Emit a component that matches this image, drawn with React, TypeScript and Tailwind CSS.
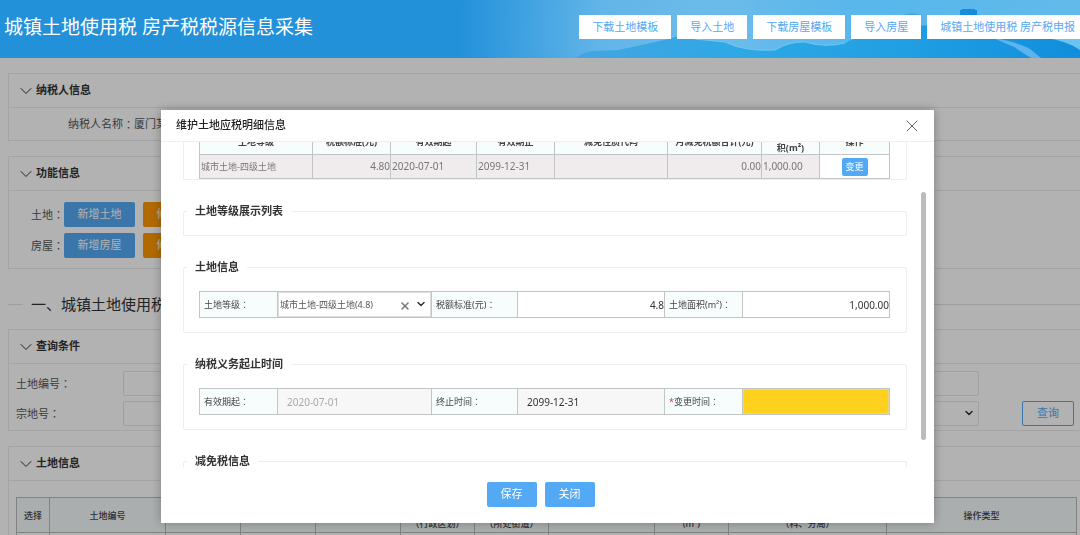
import React from 'react';
import { ChevronDown, X } from 'lucide-react';

const headerActions = ['下载土地模板', '导入土地', '下载房屋模板', '导入房屋', '城镇土地使用税 房产税申报'];

const featureRows = [
  { label: '土地', add: '新增土地', edit: '修改土地' },
  { label: '房屋', add: '新增房屋', edit: '修改房屋' }
];

const landColumns = [
  { lines: ['选择'], width: 'w-[33px]' },
  { lines: ['土地编号'], width: 'w-[116px]' },
  { lines: ['宗地号'], width: 'w-[75px]' },
  { lines: ['土地名称'], width: 'w-[75px]' },
  { lines: ['土地性质'], width: 'w-[85px]' },
  { lines: ['土地坐落', '（行政区划）'], width: 'w-[74px]' },
  { lines: ['土地坐落', '（所处街道）'], width: 'w-[74px]' },
  { lines: ['详细地址'], width: 'w-[106px]' },
  { lines: ['土地面积', '(m²)'], width: 'w-[74px]' },
  { lines: ['主管税务所', '（科、分局）'], width: 'w-[158px]' },
  { lines: ['操作类型'], width: 'w-[190px]' }
];

const detailColumns = [
  { lines: ['土地等级'], width: 'w-[113px]' },
  { lines: ['税额标准(元)'], width: 'w-[78px]' },
  { lines: ['有效期起'], width: 'w-[86px]' },
  { lines: ['有效期止'], width: 'w-[78px]' },
  { lines: ['减免性质代码'], width: 'w-[113px]' },
  { lines: ['月减免税额合计(元)'], width: 'w-[94px]' },
  { lines: ['土地面', '积(m²)'], width: 'w-[58px]' },
  { lines: ['操作'], width: 'w-[70px]' }
];

const labelCell = 'border border-[#c2c5c6] bg-[#f7fcfd] pl-1 text-left text-[9px] font-normal text-[#444]';
const fieldCell = 'h-[26px] border border-[#c2c5c6] p-0';

// The TC face centres its full-width colon
function Colon() {
  return <span className="font-['Noto_Sans_CJK_TC',sans-serif]">：</span>;
}

function HeaderArt() {
  return (
    <svg className="absolute inset-y-0 right-0 h-full w-[640px]" viewBox="-60 0 640 58" preserveAspectRatio="none" aria-hidden="true">
      <defs>
        <radialGradient id="sky" gradientUnits="userSpaceOnUse" cx="240" cy="30" r="280">
          <stop offset="0" stopColor="#70bdea" />
          <stop offset="0.5" stopColor="#62b5e8" />
          <stop offset="1" stopColor="#2391da" />
        </radialGradient>
        <linearGradient id="skyRight" x1="0" x2="1">
          <stop offset="0.4" stopColor="#58b7ec" stopOpacity="0" />
          <stop offset="0.7" stopColor="#58b7ec" />
          <stop offset="1" stopColor="#62baea" />
        </linearGradient>
        <linearGradient id="sea" x1="0" x2="1">
          <stop offset="0" stopColor="#43a5e2" />
          <stop offset="0.3" stopColor="#2fa8e5" />
          <stop offset="0.65" stopColor="#209fe3" />
          <stop offset="1" stopColor="#118edc" />
        </linearGradient>
      </defs>
      <rect x="-60" width="640" height="58" fill="url(#sky)" />
      <rect x="-60" width="640" height="58" fill="url(#skyRight)" />
      <path d="M402 16q10-6 20 0z" fill="#44a8e3" />
      <path d="M460 15v-5h2V9h13v1h2v5z" fill="#168ddb" />
      <path d="M76 58Q85 51 94 51L118 50 142 45 168 39Q180 34 195 39L225 42Q245 52 275 50Q290 41 305 42Q325 48 345 43Q370 30 410 25L580 30V58z" fill="url(#sea)" />
      <path d="M195 39L225 42Q245 52 275 50Q290 41 305 42Q325 48 345 43" fill="none" stroke="#6fcaf2" strokeWidth="1" />
      <path d="M493 38Q515 41 530 49L541 58H531L514 47z" fill="#5eb3ec" />
      <path d="M545 38Q565 40 580 50V38z" fill="#6bc3ee" />
    </svg>
  );
}

function Panel({ title, children }: { title: string; children: React.ReactNode }) {
  return (
    <section className="border border-r-0 border-[#ebebeb]">
      <h2 className="flex h-[34px] items-center border-b border-[#ebebeb] pl-[7px] text-[11px] font-bold text-[#333]">
        <ChevronDown className="size-5" strokeWidth={1.2} />
        {title}
      </h2>
      {children}
    </section>
  );
}

function Group({ title, className, children }: { title: string; className?: string; children?: React.ReactNode }) {
  return (
    <fieldset className={`mt-[23px] min-w-0 rounded-xs border border-[#eee] pr-4 pl-[15px] ${className ?? ''}`}>
      <legend className="-ml-3 h-4 px-2 text-[11px] leading-4 font-bold text-[#333]">{title}</legend>
      {children}
    </fieldset>
  );
}

function FormCols() {
  return (
    <colgroup>
      <col className="w-[78px]" />
      <col className="w-[154px]" />
      <col className="w-[86px]" />
      <col className="w-[147px]" />
      <col className="w-[78px]" />
      <col className="w-[147px]" />
    </colgroup>
  );
}

function DetailDialog() {
  return (
    <div role="dialog" aria-labelledby="dialog-title" className="w-full max-w-[773px] bg-white shadow-[0_0_10px_rgba(0,0,0,0.3)]">
      <div className="flex h-8 items-center justify-between border-b border-[#f0f0f0] pr-3 pl-[15px]">
        <h2 id="dialog-title" className="text-[11px] font-medium text-[#222]">维护土地应税明细信息</h2>
        <button type="button" aria-label="关闭" className="text-[#666]">
          <X className="size-5" strokeWidth={1.2} />
        </button>
      </div>

      <div className="relative h-[325px] overflow-hidden pr-[27px] pl-[22px]">
        <div className="-mt-[15px] flex flex-col">
          <div className="rounded-xs border border-t-0 border-[#eee] pr-4 pl-[15px]">
            <table className="w-full table-fixed border-collapse text-[9px]">
              <thead>
                <tr className="h-[27px] bg-[#f7fcfd]">
                  {detailColumns.map((col, idx) => (
                    <th key={idx} className={`border border-[#c2c5c6] p-0 leading-[13px] font-bold whitespace-nowrap text-[#444] ${col.width}`}>
                      {col.lines.map((line) => (
                        <span key={line} className="block">{line}</span>
                      ))}
                    </th>
                  ))}
                </tr>
              </thead>
              <tbody>
                <tr className="h-6 bg-[#f0ecee] text-[#777]">
                  <td className="border border-[#c2c5c6] p-0 pl-px">城市土地-四级土地</td>
                  <td className="border border-[#c2c5c6] p-0 text-right text-[10px]">4.80</td>
                  <td className="border border-[#c2c5c6] p-0 pl-px text-[10px]">2020-07-01</td>
                  <td className="border border-[#c2c5c6] p-0 pl-px text-[10px]">2099-12-31</td>
                  <td className="border border-[#c2c5c6] p-0" />
                  <td className="border border-[#c2c5c6] p-0 text-right text-[10px]">0.00</td>
                  <td className="border border-[#c2c5c6] p-0 pl-px text-[10px]">1,000.00</td>
                  <td className="border border-[#c2c5c6] bg-white p-0 text-center">
                    <button type="button" className="h-[18px] w-[26px] rounded-xs bg-[#54a9f4] align-middle text-[9px] leading-4 text-white">变更</button>
                  </td>
                </tr>
              </tbody>
            </table>
          </div>

          <Group title="土地等级展示列表" className="pb-4" />

          <Group title="土地信息" className="pb-[14px]">
            <table className="mt-4 w-full table-fixed border-collapse">
              <FormCols />
              <tbody>
                <tr>
                  <th className={labelCell}><label htmlFor="grade">土地等级<Colon /></label></th>
                  <td className={fieldCell}>
                    <div className="relative">
                      <select id="grade" className="block h-[25px] w-full appearance-none border border-[#ddd] bg-white pl-px text-[9px] text-[#555]">
                        <option>城市土地-四级土地(4.8)</option>
                      </select>
                      <button type="button" aria-label="清除" className="absolute top-2 right-5 text-[#777]">
                        <X className="size-3" strokeWidth={3} />
                      </button>
                      <ChevronDown className="pointer-events-none absolute top-[6px] right-1 size-3 text-[#333]" strokeWidth={3} />
                    </div>
                  </td>
                  <th className={labelCell}><label htmlFor="standard">税额标准(元)<Colon /></label></th>
                  <td className={fieldCell}>
                    <input id="standard" defaultValue="4.8" className="block h-[25px] w-full text-right text-[10px] text-[#333]" />
                  </td>
                  <th className={labelCell}><label htmlFor="area">土地面积(m²)<Colon /></label></th>
                  <td className={fieldCell}>
                    <input id="area" defaultValue="1,000.00" className="block h-[25px] w-full text-right text-[10px] text-[#333]" />
                  </td>
                </tr>
              </tbody>
            </table>
          </Group>

          <Group title="纳税义务起止时间" className="pb-[14px]">
            <table className="mt-4 w-full table-fixed border-collapse">
              <FormCols />
              <tbody>
                <tr>
                  <th className={labelCell}><label htmlFor="start">有效期起<Colon /></label></th>
                  <td className={fieldCell}>
                    <input id="start" disabled defaultValue="2020-07-01" className="block h-[25px] w-full bg-[#f7f7f7] pl-[9px] text-[10px] text-[#aaa]" />
                  </td>
                  <th className={labelCell}><label htmlFor="end">终止时间<Colon /></label></th>
                  <td className={fieldCell}>
                    <input id="end" readOnly defaultValue="2099-12-31" className="block h-[25px] w-full bg-[#f7f7f7] pl-[9px] text-[10px] text-[#333]" />
                  </td>
                  <th className={labelCell}><label htmlFor="change"><span className="text-red-500">*</span>变更时间<Colon /></label></th>
                  <td className={fieldCell}>
                    <input id="change" className="block h-[25px] w-full border border-[#e6d68f] bg-[#ffd11f] text-[10px]" />
                  </td>
                </tr>
              </tbody>
            </table>
          </Group>

          <Group title="减免税信息" className="pb-10" />
        </div>
        {/* scroll thumb */}
        <div className="absolute top-[50px] right-2 h-[248px] w-[5px] rounded-full bg-[#bbb]" />
      </div>

      <div className="flex justify-center gap-2 pt-[15px] pr-[22px] pb-4 pl-2">
        <button type="button" className="h-[25px] w-[50px] rounded-xs bg-[#54a9f4] text-[11px] text-white">保存</button>
        <button type="button" className="h-[25px] w-[50px] rounded-xs bg-[#54a9f4] text-[11px] text-white">关闭</button>
      </div>
    </div>
  );
}

export default function App() {
  return (
    <div className="h-screen overflow-hidden bg-white font-['Noto_Sans','Noto_Sans_CJK_SC',sans-serif] text-[11px] text-[#555]">
      <header className="relative z-20 flex h-[58px] items-center justify-between overflow-hidden bg-[#2391da] pl-1">
        <HeaderArt />
        <h1 className="relative pb-1 text-[19px] leading-6 whitespace-nowrap text-white">城镇土地使用税 房产税税源信息采集</h1>
        <nav className="relative -mr-2 flex shrink-0 gap-[6px] pb-1">
          {headerActions.map((label) => (
            <button key={label} type="button" className="h-6 bg-white px-[13px] text-[11px] whitespace-nowrap text-[#54a9f4]">{label}</button>
          ))}
        </nav>
      </header>

      <main className="pt-[15px] pl-2">
        <Panel title="纳税人信息">
          <p className="flex h-8 items-center pl-[59px]">纳税人名称<Colon />厦门某某有限公司</p>
        </Panel>

        <div className="mt-[15px]">
          <Panel title="功能信息">
            <div className="flex flex-col gap-[6px] pt-[11px] pb-[10px] pl-[22px]">
              {featureRows.map((row) => (
                <div key={row.label} className="flex items-center">
                  <span>{row.label}<Colon /></span>
                  <button type="button" className="h-[25px] w-[71px] rounded-xs bg-[#54a9f4] text-white">{row.add}</button>
                  <button type="button" className="ml-2 h-[25px] w-[71px] rounded-xs bg-[#ff9800] text-white">{row.edit}</button>
                </div>
              ))}
            </div>
          </Panel>
        </div>

        <div className="mt-[25px] mb-[15px] flex h-5 items-center gap-2">
          <span className="h-px w-[15px] bg-[#e2e2e2]" />
          <h2 className="text-[15px] leading-5 text-[#333]">一、城镇土地使用税</h2>
          <span className="h-px flex-1 bg-[#e2e2e2]" />
        </div>

        <Panel title="查询条件">
          <div className="grid grid-cols-[107px_1fr_101px] items-center gap-y-[5px] pt-[7px] pb-1 pl-[7px]">
            <label htmlFor="land-no">土地编号<Colon /></label>
            <input id="land-no" className="h-[25px] rounded-xs border border-[#e6e6e6]" />
            <span />
            <label htmlFor="parcel-no">宗地号<Colon /></label>
            <div className="relative">
              <select id="parcel-no" className="block h-[25px] w-full appearance-none rounded-xs border border-[#e6e6e6]" />
              <ChevronDown className="pointer-events-none absolute top-[6px] right-1 size-3 text-[#333]" strokeWidth={3} />
            </div>
            <button type="button" className="mr-[6px] h-[25px] w-[52px] justify-self-end rounded-xs border border-[#54a9f4] text-[#54a9f4]">查询</button>
          </div>
        </Panel>

        <div className="mt-[15px]">
          <Panel title="土地信息">
            <div className="pt-4 pr-[3px] pl-[7px]">
              <table className="w-full table-fixed border-collapse text-[9px] text-[#444]">
                <thead>
                  <tr className="h-[35px] bg-[#f4fafb]">
                    {landColumns.map((col, idx) => (
                      <th key={idx} className={`border border-[#b9bcbc] p-0 leading-[17px] font-medium whitespace-nowrap ${col.width}`}>
                        {col.lines.map((line) => (
                          <span key={line} className="block">{line}</span>
                        ))}
                      </th>
                    ))}
                  </tr>
                </thead>
                <tbody>
                  <tr className="h-8">
                    {landColumns.slice(1).map((col, idx) => (
                      <td key={idx} className="border border-[#b9bcbc] p-0" />
                    ))}
                    <td className="border border-[#b9bcbc] p-0">
                      <div className="flex justify-center gap-2">
                        <button type="button" className="h-7 w-[45px] rounded-xs bg-[#3b9bee] text-white">修改</button>
                        <button type="button" className="h-7 w-[45px] rounded-xs bg-[#3b9bee] text-white">应税明细</button>
                        <button type="button" className="h-7 w-[46px] rounded-xs border border-[#54a9f4] text-[#54a9f4]">作废</button>
                      </div>
                    </td>
                  </tr>
                </tbody>
              </table>
            </div>
          </Panel>
        </div>
      </main>

      {/* Mask sits under the page header */}
      <div className="fixed inset-0 z-10 flex items-start justify-center bg-black/30 pt-[110px] pl-[15px]">
        <DetailDialog />
      </div>
    </div>
  );
}
